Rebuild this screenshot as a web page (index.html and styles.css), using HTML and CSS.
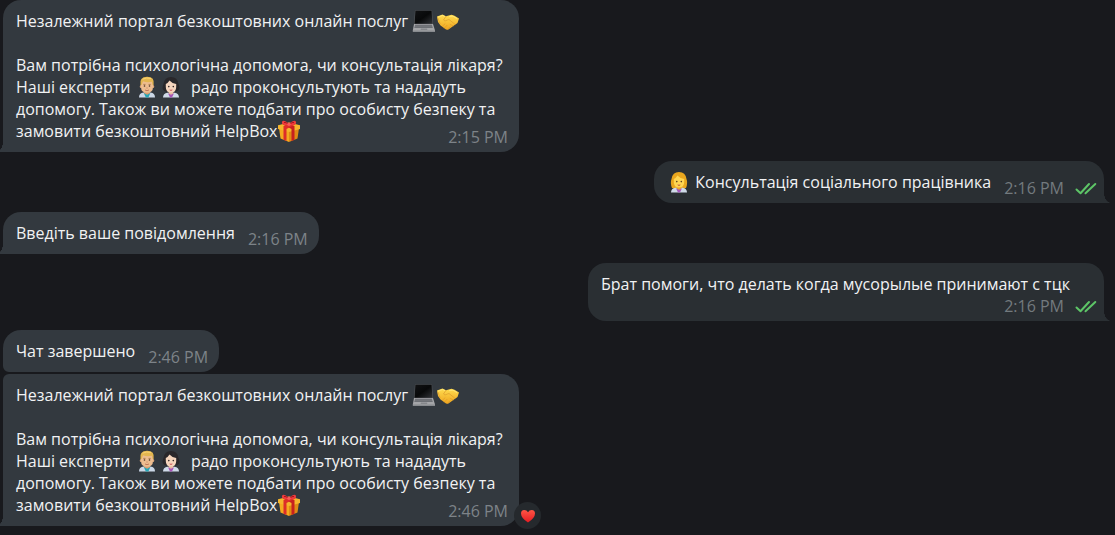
FILE: index.html
```html
<!DOCTYPE html>
<html lang="uk">
<head>
<meta charset="utf-8">
<title>Чат</title>
<link rel="stylesheet" href="styles.css">
</head>
<body>
<svg class="defs" aria-hidden="true">
  <defs>
    <linearGradient id="screen" x1="0" y1="0" x2="1" y2="1"><stop offset="0" stop-color="#111214"/><stop offset=".5" stop-color="#08090a"/><stop offset="1" stop-color="#303236"/></linearGradient>
    <linearGradient id="gold" x1="0" y1="0" x2="0" y2="1"><stop offset="0" stop-color="#ffdc50"/><stop offset="1" stop-color="#efa51e"/></linearGradient>
    <linearGradient id="ruby" x1="0" y1="0" x2="0" y2="1"><stop offset="0" stop-color="#ff5545"/><stop offset="1" stop-color="#e51b22"/></linearGradient>
    <symbol id="laptop" viewBox="0 0 24 22">
      <path d="M3 .5h17l1 14H2z" fill="#56585c"/>
      <path d="M3.400 .8h16.200l.8 13H2.600z" fill="url(#screen)"/>
      <path d="M2 14h19l2 6.500H.8z" fill="#a4a5a8"/>
      <path d="M3.200 14.800h16.600l.9 3.200H2.400z" fill="#64666b"/>
      <path d="M3 15.900h17M2.700 17h17.600" stroke="#96989c" stroke-width=".4"/>
      <path d="M9 18.400h6l.4 1.700H8.600z" fill="#85878b"/>
      <path d="M.8 20.500H23V21.600H.8z" fill="#c2c3c5"/>
    </symbol>
    <symbol id="handshake" viewBox="0 0 24 22">
      <path d="M1 6.500 6.500 4.500 10 6.300 15.500 4.800 18.500 5.800 23 8.500 21.500 13 18 15.500 12.500 19.500Q10.500 20.500 9 18.800L4.500 15.500 2 12z" fill="url(#gold)"/>
      <path d="M10 6.300 7.500 10Q8.500 12 11.500 10L13 9.500 19 14.300M8.500 18 11 15.300M6.500 16.200 9 13.800M12 18.800 14 17M14.200 14.500 17.200 15.800M1.800 8 4 13.500" fill="none" stroke="#d9962a" stroke-width=".6" stroke-linecap="round"/>
      <path d="M2 7.200 6.500 5.500 9 6.600M13 6.600 17 6.200 21 8.600" fill="none" stroke="#ffe879" stroke-width=".9"/>
    </symbol>
    <symbol id="doctor-man" viewBox="0 0 24 22">
      <path d="M4 21.500q0-4.500 4.500-5h7q4.500.5 4.500 5z" fill="#cbd7e6"/>
      <path d="M9 14h6v3.500l-3 3-3-3z" fill="#d99d70"/>
      <path d="m8.800 17 2 4.500h2.600l2-4.500-3.300 1.800z" fill="#27a6b5"/>
      <ellipse cx="5.800" cy="10.500" rx="1" ry="1.500" fill="#dfa678"/><ellipse cx="18.200" cy="10.500" rx="1" ry="1.500" fill="#dfa678"/>
      <path d="M6 8q0-5 6-5t6 5v3q0 5.800-6 5.800T6 11z" fill="#edbd90"/>
      <path d="M5.500 9Q4 1 12 .8T18.600 9L17.500 9 17 5.800Q12 6.800 8 5.300L6.600 9z" fill="#e3b650"/>
      <path d="M7.500 3.200q4-2 8.500-.7" stroke="#ffda78" fill="none" stroke-width=".8"/>
      <path d="M8.300 8.400h2.200m3 0h2.200" stroke="#9a6533" stroke-width=".7"/>
      <circle cx="9.500" cy="10" r=".8" fill="#463022"/><circle cx="14.500" cy="10" r=".8" fill="#463022"/>
      <path d="M11.500 12h1M10 14q2 1.400 4 0" fill="none" stroke="#b4654b" stroke-width=".8"/>
    </symbol>
    <symbol id="doctor-woman-dark" viewBox="0 0 24 22">
      <path d="M5.500 15Q2 13 4.500 8 5.500 1 12 1t7.500 7Q22 13 18.500 15L15 16H9z" fill="#29272a"/>
      <path d="M4 21.500q0-4.300 4.500-4.800h7q4.500.5 4.500 4.800z" fill="#cfdae8"/>
      <path d="M9.800 14h4.400v3.500l-2.200 3-2.200-3z" fill="#e5b99f"/>
      <path d="m9 17.200 2 4.300h2l2-4.300-3 1.600z" fill="#a653b5"/>
      <path d="M6.800 8Q9 7 10.500 4.500 13 7.500 17.200 8v3q0 5.500-5.200 5.500T6.800 11z" fill="#f5d5bd"/>
      <circle cx="9.800" cy="10.600" r=".8" fill="#302423"/><circle cx="14.300" cy="10.600" r=".8" fill="#302423"/>
      <path d="M10.700 13.900q1.300 1 2.600 0" fill="none" stroke="#c94c55" stroke-width="1"/>
    </symbol>
    <symbol id="doctor-woman" viewBox="0 0 24 22">
      <path d="M5 17Q3 12 4.500 8 5.500 1 12 1t7.500 7Q21 12 19 17L15 18H9z" fill="#e9a61e"/>
      <path d="M4 21.500q0-4.300 4.500-4.800h7q4.500.5 4.500 4.800z" fill="#cfdae8"/>
      <path d="M9.800 14h4.400v3.500l-2.200 3-2.200-3z" fill="#e9a72a"/>
      <path d="m9 17.200 2 4.300h2l2-4.300-3 1.600z" fill="#a65abc"/>
      <path d="M6.800 8Q9 7 10.500 4.500 13 7.500 17.200 8v3q0 5.500-5.200 5.500T6.800 11z" fill="#ffd652"/>
      <circle cx="9.800" cy="10.600" r=".8" fill="#5b3a1c"/><circle cx="14.300" cy="10.600" r=".8" fill="#5b3a1c"/>
      <path d="M10.700 13.900q1.300 1 2.600 0" fill="none" stroke="#c4513b" stroke-width="1"/>
    </symbol>
    <symbol id="gift" viewBox="0 0 24 22">
      <path d="m2 8 10 2.500V22L3.500 18.500z" fill="#f4a91f"/>
      <path d="M12 10.500 22 8l-1.500 10.500L12 22z" fill="#e08a15"/>
      <path d="m1 5.200 11-2.700 11 2.700V9l-11 3L1 9z" fill="#f5b52d"/>
      <path d="m5.500 4.300 3-.8 9 2.500v13.800l-3 1.200V9z" fill="#c8201f"/>
      <path d="m18.500 4.300-3-.8L6.500 6v13.700l3 1.300V9z" fill="#dd2d29"/>
      <path d="M12 5Q4 6 5 2 6-1 12 3.800 18-1 19 2q1 4-7 3z" fill="#ee3c3d"/>
      <path d="M7 2.500q2-.5 4 1.500M17 2.500q-2-.5-4 1.500" stroke="#a91419" fill="none"/>
      <circle cx="12" cy="4.300" r="1.700" fill="#fa5a56"/>
    </symbol>
    <symbol id="checks" viewBox="0 0 22 14">
      <path d="m1.500 8.500 4 3.700L14 3M10.500 12.200 20.300 3" fill="none" stroke="#5dc567" stroke-width="2" stroke-linecap="round" stroke-linejoin="round"/>
    </symbol>
    <symbol id="heart" viewBox="0 0 16 14">
      <path d="M8 13.500Q1 9 1 4.500 1 1 4.200 1 6.800 1 8 3.300 9.200 1 11.800 1 15 1 15 4.500 15 9 8 13.500z" fill="url(#ruby)"/>
    </symbol>
  </defs>
</svg>
<main class="chat">
  <article class="message received stacked tail">
    <div class="text">Незалежний портал безкоштовних онлайн послуг <svg class="emoji" role="img" aria-label="ноутбук"><use href="#laptop"/></svg><svg class="emoji" role="img" aria-label="рукостискання"><use href="#handshake"/></svg><br><br>Вам потрібна психологічна допомога, чи консультація лікаря?<br>Наші експерти <svg class="emoji" role="img" aria-label="лікар"><use href="#doctor-man"/></svg><svg class="emoji" role="img" aria-label="лікарка"><use href="#doctor-woman-dark"/></svg>&nbsp; радо проконсультують та нададуть допомогу. Також ви можете подбати про особисту безпеку та замовити безкоштовний HelpBox<svg class="emoji" role="img" aria-label="подарунок"><use href="#gift"/></svg></div>
    <div class="meta overlap"><time>2:15 PM</time></div>
  </article>
  <article class="message sent inline tail">
    <div class="text"><svg class="emoji" role="img" aria-label="лікарка"><use href="#doctor-woman"/></svg> Консультація соціального працівника</div>
    <div class="meta"><time>2:16 PM</time><svg class="checks" role="img" aria-label="прочитано"><use href="#checks"/></svg></div>
  </article>
  <article class="message received inline tail">
    <div class="text">Введіть ваше повідомлення</div>
    <div class="meta"><time>2:16 PM</time></div>
  </article>
  <article class="message sent stacked tail">
    <div class="text">Брат помоги, что делать когда мусорылые принимают с тцк</div>
    <div class="meta"><time>2:16 PM</time><svg class="checks" role="img" aria-label="прочитано"><use href="#checks"/></svg></div>
  </article>
  <article class="message received inline group-first">
    <div class="text">Чат завершено</div>
    <div class="meta"><time>2:46 PM</time></div>
  </article>
  <article class="message received stacked tail group-last">
    <div class="text">Незалежний портал безкоштовних онлайн послуг <svg class="emoji" role="img" aria-label="ноутбук"><use href="#laptop"/></svg><svg class="emoji" role="img" aria-label="рукостискання"><use href="#handshake"/></svg><br><br>Вам потрібна психологічна допомога, чи консультація лікаря?<br>Наші експерти <svg class="emoji" role="img" aria-label="лікар"><use href="#doctor-man"/></svg><svg class="emoji" role="img" aria-label="лікарка"><use href="#doctor-woman-dark"/></svg>&nbsp; радо проконсультують та нададуть допомогу. Також ви можете подбати про особисту безпеку та замовити безкоштовний HelpBox<svg class="emoji" role="img" aria-label="подарунок"><use href="#gift"/></svg></div>
    <div class="meta overlap"><time>2:46 PM</time></div>
    <button class="reaction" type="button" aria-label="Подобається"><svg class="heart" aria-hidden="true"><use href="#heart"/></svg></button>
  </article>
</main>
</body>
</html>
```
FILE: styles.css
```css
* {
  box-sizing: border-box;
}

body {
  margin: 0;
  overflow-x: hidden;
  background: #18191d;
  color: #f1f2f3;
  font: 16px/22px "Open Sans", "Noto Sans", sans-serif;
}

.defs {
  position: absolute;
  width: 0;
  height: 0;
}

.chat {
  display: flex;
  flex-direction: column;
  gap: 9px;
  padding: 0 11px 9px 3px;
}

.message {
  --bubble: #33393f;
  position: relative;
  display: flex;
  max-width: 516px;
  padding: 10px 11px 4px 13px;
  border-radius: 18px;
  background: var(--bubble);
}

.received {
  align-self: flex-start;
}

.sent {
  --bubble: #2a2f33;
  align-self: flex-end;
  padding-right: 7px;
}

.stacked {
  flex-direction: column;
}

.inline {
  align-items: flex-end;
  gap: 13px;
}

.inline .text {
  margin-bottom: 6px;
}

.sent.stacked {
  width: 516px;
}

.meta {
  display: flex;
  align-self: flex-end;
  align-items: center;
  gap: 11px;
  color: #7d8388;
  white-space: nowrap;
}

.sent .meta {
  color: #737a7e;
}

.overlap {
  margin-top: -16px;
}

.emoji {
  width: 24px;
  height: 22px;
  vertical-align: top;
}

.checks {
  width: 22px;
  height: 14px;
}

.tail::after {
  content: "";
  position: absolute;
  bottom: 0;
  width: 7px;
  height: 10px;
}

.received.tail {
  border-bottom-left-radius: 0;
}

.received.tail::after {
  right: 100%;
  background: radial-gradient(7px 10px at top left, transparent 96%, var(--bubble));
}

.sent.tail {
  border-bottom-right-radius: 0;
}

.sent.tail::after {
  left: 100%;
  background: radial-gradient(7px 10px at top right, transparent 96%, var(--bubble));
}

.group-first {
  margin-bottom: -7px;
  border-bottom-left-radius: 6px;
}

.group-last {
  border-top-left-radius: 6px;
}

.reaction {
  position: absolute;
  right: -22px;
  bottom: -3px;
  display: flex;
  align-items: center;
  justify-content: center;
  width: 27px;
  height: 27px;
  padding: 0;
  border: 0;
  border-radius: 50%;
  background: #25292d;
}

.heart {
  width: 16px;
  height: 14px;
}
```
